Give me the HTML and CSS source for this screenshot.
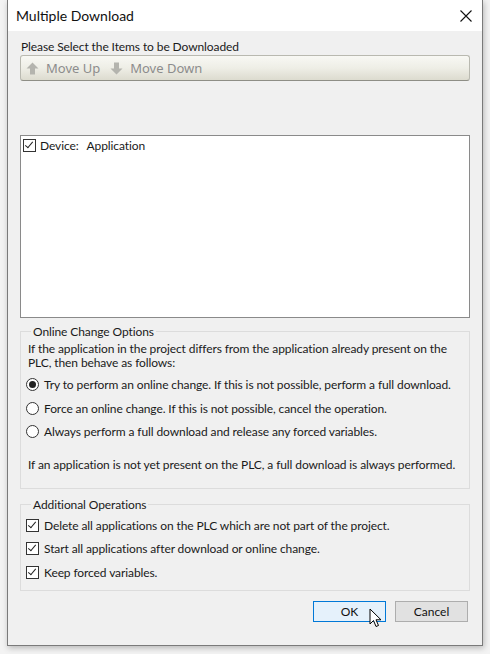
FILE: index.html
```html
<!DOCTYPE html>
<html>
<head>
<meta charset="utf-8">
<link rel="stylesheet" href="styles.css">
</head>
<body>
<div class="window">
  <div class="titlebar">
    <span class="title">Multiple Download</span>
    <svg class="close" width="12" height="12" viewBox="0 0 12 12"><path d="M0.5 0.5 L11.5 11.5 M11.5 0.5 L0.5 11.5" stroke="#111" stroke-width="1.1" fill="none"/></svg>
  </div>
  <div class="content">
    <div class="prompt">Please Select the Items to be Downloaded</div>
    <div class="toolbar">
      <span class="tbtn">
        <svg width="13" height="13" viewBox="0 0 13 13"><path d="M6.5 0.5 L12.5 6.5 L9 6.5 L9 12.5 L4 12.5 L4 6.5 L0.5 6.5 Z" fill="#b4b4ae"/></svg>
        Move Up
      </span>
      <span class="tbtn">
        <svg width="13" height="13" viewBox="0 0 13 13"><path d="M6.5 12.5 L12.5 6.5 L9 6.5 L9 0.5 L4 0.5 L4 6.5 L0.5 6.5 Z" fill="#b4b4ae"/></svg>
        Move Down
      </span>
    </div>
    <div class="listbox">
      <div class="listrow">
        <span class="cb checked"></span>
        <span>Device:</span>
        <span class="devname">Application</span>
      </div>
    </div>
    <fieldset class="group g1">
      <legend>Online Change Options</legend>
      <p class="desc">If the application in the project differs from the application already present on the<br>PLC, then behave as follows:</p>
      <div class="opts">
        <div class="opt"><span class="radio on"></span>Try to perform an online change. If this is not possible, perform a full download.</div>
        <div class="opt"><span class="radio"></span>Force an online change. If this is not possible, cancel the operation.</div>
        <div class="opt"><span class="radio"></span>Always perform a full download and release any forced variables.</div>
      </div>
      <p class="note">If an application is not yet present on the PLC, a full download is always performed.</p>
    </fieldset>
    <fieldset class="group g2">
      <legend>Additional Operations</legend>
      <div class="opts">
        <div class="opt"><span class="cb checked"></span>Delete all applications on the PLC which are not part of the project.</div>
        <div class="opt"><span class="cb checked"></span>Start all applications after download or online change.</div>
        <div class="opt"><span class="cb checked"></span>Keep forced variables.</div>
      </div>
    </fieldset>
    <div class="buttons">
      <button class="btn default">OK</button>
      <button class="btn">Cancel</button>
    </div>
  </div>
  <svg class="cursor" width="14" height="22" viewBox="0 0 14 22"><path d="M1 1 L1 16 L4.5 12.5 L7 18.5 L9.5 17.5 L7 11.8 L12 11.8 Z" fill="#fff" stroke="#000" stroke-width="1" stroke-linejoin="round"/></svg>
</div>
</body>
</html>
```

FILE: styles.css
```css
html, body {
  margin: 0;
  padding: 0;
}
body {
  width: 490px;
  height: 654px;
  background: #f3f3f3;
  font-family: "Lato", "Noto Sans", sans-serif;
  font-size: 12px;
  letter-spacing: -0.1px;
  color: #1a1a1a;
  overflow: hidden;
}
.window {
  position: relative;
  margin-left: 7px;
  width: 474px;
  height: 645px;
  border: 1px solid #7a7a7a;
  border-top: none;
  background: #f0f0f0;
  box-shadow: 1px 2px 6px rgba(0,0,0,0.25);
}
.titlebar {
  height: 31px;
  background: #fff;
  display: flex;
  align-items: center;
  justify-content: space-between;
  padding: 0 10px 0 8px;
}
.title {
  font-size: 14px;
  letter-spacing: 0;
  color: #111;
}
.content {
  padding: 8px 12px 0 12px;
  display: flex;
  flex-direction: column;
}
.prompt {
  line-height: 15px;
  padding-left: 1px;
}
.toolbar {
  margin-top: 1px;
  height: 24px;
  border: 1px solid #b9b9b0;
  border-bottom-color: #8e8e86;
  border-radius: 3px;
  background: linear-gradient(#f8f8f4, #eeeee6 50%, #dcdbcf);
  display: flex;
  align-items: center;
  gap: 10px;
  padding-left: 5px;
}
.tbtn {
  display: flex;
  align-items: center;
  gap: 7px;
  font-family: "Noto Sans", sans-serif;
  letter-spacing: 0;
  font-size: 13px;
  color: #8c8c8c;
}
.listbox {
  margin-top: 54px;
  height: 183px;
  box-sizing: border-box;
  background: #fff;
  border: 1px solid #8a8a8a;
  padding: 3px 2px;
}
.listrow {
  display: flex;
  align-items: center;
  gap: 4px;
  height: 13px;
}
.devname {
  margin-left: 4px;
}
.cb {
  width: 11px;
  height: 11px;
  border: 1px solid #333;
  background: #fff;
  position: relative;
  flex: none;
}
.cb.checked::after {
  content: "";
  position: absolute;
  left: 3px;
  top: 0px;
  width: 3px;
  height: 7px;
  border-right: 1px solid #222;
  border-bottom: 1px solid #222;
  transform: rotate(40deg);
}
.radio {
  width: 11px;
  height: 11px;
  border: 1px solid #333;
  border-radius: 50%;
  background: #fff;
  position: relative;
  flex: none;
}
.radio.on::after {
  content: "";
  position: absolute;
  left: 2px;
  top: 2px;
  width: 7px;
  height: 7px;
  border-radius: 50%;
  background: #222;
}
.group {
  margin: 0;
  border: 1px solid #dcdcdc;
  padding: 0 5px 0 5px;
}
.group legend {
  padding: 0 2px;
  margin-left: 5px;
  line-height: 15px;
}
.g1 {
  margin-top: 6px;
  padding-bottom: 16px;
}
.desc {
  margin: 3px 0 0 2px;
  line-height: 14px;
}
.opts {
  display: flex;
  flex-direction: column;
}
.opt {
  display: flex;
  align-items: center;
  gap: 5px;
  height: 23.5px;
}
.g1 .opts {
  margin-top: 3px;
}
.note {
  margin: 13px 0 0 2px;
  line-height: 15px;
}
.g2 {
  margin-top: 8px;
  padding-bottom: 6px;
}
.g2 .opts {
  margin-top: 2px;
}
.buttons {
  display: flex;
  justify-content: flex-end;
  gap: 9px;
  margin-top: 10px;
  padding-right: 2px;
}
.btn {
  width: 73px;
  height: 21px;
  font-family: inherit;
  font-size: 12px;
  color: #111;
  background: #e1e1e1;
  border: 1px solid #adadad;
  padding: 0;
}
.btn.default {
  background: #e5f1fb;
  border: 1px solid #0078d7;
}
.cursor {
  position: absolute;
  left: 361px;
  top: 608px;
}
```
